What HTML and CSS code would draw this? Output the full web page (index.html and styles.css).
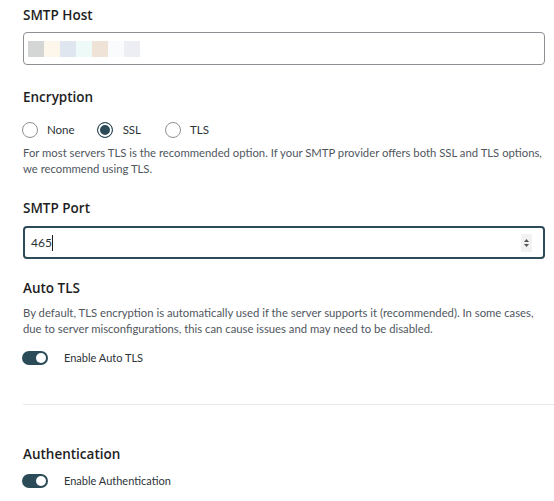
FILE: index.html
```html
<!DOCTYPE html>
<html>
<head>
<meta charset="utf-8">
<link rel="stylesheet" href="styles.css">
</head>
<body>
<div class="page">
  <div class="label label-host">SMTP Host</div>
  <div class="input">
    <div class="blur">
      <span class="b1"></span><span class="b2"></span><span class="b3"></span><span class="b4"></span><span class="b5"></span><span class="b6"></span><span class="b7"></span>
    </div>
  </div>

  <div class="label label-enc">Encryption</div>
  <div class="radios">
    <div class="radio r-none"><span class="circle"></span><span class="rtext">None</span></div>
    <div class="radio r-ssl"><span class="circle checked"></span><span class="rtext">SSL</span></div>
    <div class="radio"><span class="circle"></span><span class="rtext">TLS</span></div>
  </div>
  <p class="help help-enc">For most servers TLS is the recommended option. If your SMTP provider offers both SSL and TLS options, we recommend using TLS.</p>

  <div class="label label-port">SMTP Port</div>
  <div class="input focused">
    <span class="value">465</span><span class="caret"></span>
    <span class="spin">
      <svg width="7" height="12" viewBox="0 0 7 12"><path d="M3.5 2 L6 5 L1 5 Z" fill="#555"/><path d="M3.5 10 L6 7 L1 7 Z" fill="#555"/></svg>
    </span>
  </div>

  <div class="label label-auto">Auto TLS</div>
  <p class="help help-auto">By default, TLS encryption is automatically used if the server supports it (recommended). In some cases, due to server misconfigurations, this can cause issues and may need to be disabled.</p>
  <div class="toggle-row row-auto"><span class="toggle"><span class="knob"></span></span><span class="ttext">Enable Auto TLS</span></div>

  <div class="divider"></div>

  <div class="label label-auth">Authentication</div>
  <div class="toggle-row row-auth"><span class="toggle"><span class="knob"></span></span><span class="ttext">Enable Authentication</span></div>
</div>
</body>
</html>
```

FILE: styles.css
```css
* { box-sizing: border-box; }
html, body { margin: 0; padding: 0; background: #fff; }
body {
  font-family: "Lato", "Open Sans", "Liberation Sans", sans-serif;
  color: #1e1e1e;
}
.page { padding: 5px 9px 0 23px; }
.label {
  font-family: "Open Sans", "Noto Sans", sans-serif;
  font-size: 13.5px;
  line-height: 20px;
  font-weight: 600;
  color: #1e1e1e;
}
.label-host { margin-bottom: 7px; }
.label-enc { margin-top: 22px; }
.label-port { margin-top: 21px; margin-bottom: 8px; }
.label-auto { margin-top: 19px; }
.label-auth { margin-top: 39px; }

.input {
  height: 33px;
  border: 1px solid #8c8f94;
  border-radius: 4px;
  display: flex;
  align-items: center;
  padding-left: 4px;
  position: relative;
}
.input.focused {
  border: 2px solid #2b4b58;
  padding-left: 6px;
  padding-right: 11px;
}
.blur { display: flex; height: 16px; }
.blur span { width: 16px; height: 16px; display: block; }
.b1 { background: #d4d6d5; }
.b2 { background: #fdf6ea; }
.b3 { background: #dfe6ef; }
.b4 { background: #eefaf7; }
.b5 { background: #efe3d8; }
.b6 { background: #f9fbfd; }
.b7 { background: #eceef3; }

.value { font-size: 12px; color: #2c3338; line-height: 16px; }
.caret { width: 1px; height: 16px; background: #1e1e1e; margin-left: 0; }
.spin {
  margin-left: auto;
  width: 11px;
  height: 18px;
  background: #f2f2f2;
  display: flex;
  align-items: center;
  justify-content: center;
}

.radios {
  display: flex;
  align-items: center;
  height: 20px;
  margin-top: 13px;
}
.radio { display: flex; align-items: center; }
.r-none { margin-right: 23px; }
.r-ssl { margin-right: 25px; }
.circle {
  width: 16px;
  height: 16px;
  border-radius: 50%;
  border: 1px solid #8c8f94;
  background: #fff;
  display: block;
  margin-left: -1px;
}
.circle.checked {
  border: 1px solid #2b4b58;
  background: #2b4b58;
  box-shadow: inset 0 0 0 2px #fff;
}
.rtext { margin-left: 9px; font-size: 11.5px; color: #2c3338; line-height: 16px; }
.r-ssl .rtext { margin-left: 10px; }

.help {
  margin: 5px 0 0 0;
  font-size: 11.3px;
  line-height: 16px;
  color: #50575e;
}
.help-auto { margin-top: 7px; }

.toggle-row { display: flex; align-items: center; height: 20px; }
.row-auto { margin-top: 11px; }
.row-auth { margin-top: 7px; }
.toggle {
  width: 26px;
  height: 14px;
  border-radius: 7px;
  background: #2b4b58;
  display: flex;
  align-items: center;
  justify-content: flex-end;
  padding-right: 2px;
  margin-left: -1px;
}
.knob { width: 10px; height: 10px; border-radius: 50%; background: #fff; display: block; }
.ttext { margin-left: 16px; font-size: 11px; color: #2c3338; line-height: 16px; }

.divider {
  height: 1px;
  background: #e8e8e8;
  margin: 36px -9px 0 0;
}
```
